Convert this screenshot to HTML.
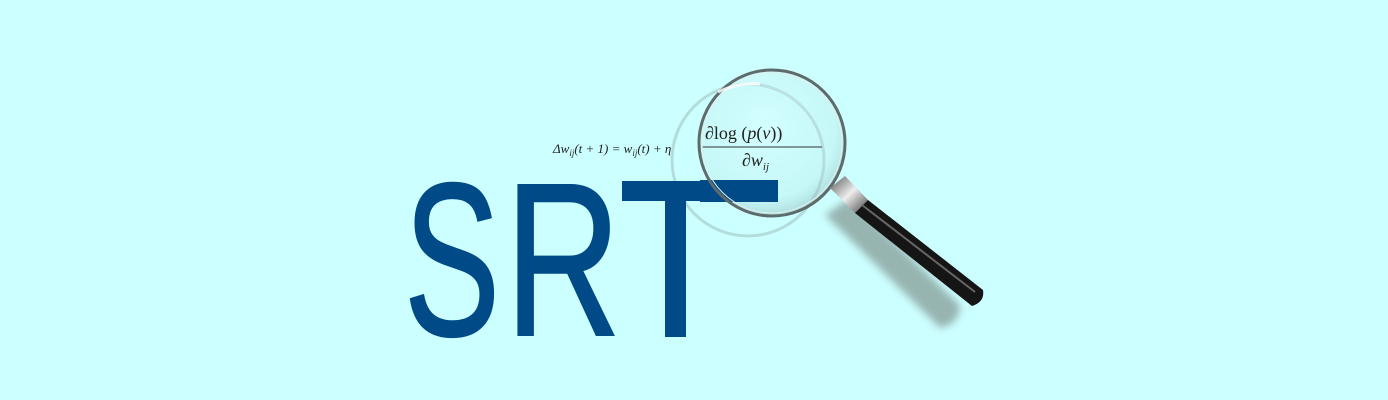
<!DOCTYPE html>
<html><head><style>
html,body{margin:0;padding:0;background:#ccffff;}
svg{display:block}
</style></head><body>
<svg width="1388" height="400" viewBox="0 0 1388 400" xmlns="http://www.w3.org/2000/svg">
<defs>
<radialGradient id="lens" cx="0.45" cy="0.4" r="0.6">
<stop offset="0" stop-color="#e6ffff" stop-opacity="0.3"/>
<stop offset="0.8" stop-color="#b5e2e2" stop-opacity="0.25"/>
<stop offset="1" stop-color="#8fb8b8" stop-opacity="0.5"/>
</radialGradient>
<linearGradient id="metal" x1="0" y1="0" x2="1" y2="1">
<stop offset="0" stop-color="#555"/><stop offset="0.5" stop-color="#eee"/><stop offset="1" stop-color="#444"/>
</linearGradient>
<filter id="blur"><feGaussianBlur stdDeviation="4"/></filter>
</defs>
<rect width="1388" height="400" fill="#ccffff"/>
<path d="M825 215 L940 328 Q960 324 960 305 L850 198 Z" fill="#8ea8a4" opacity="0.85" filter="url(#blur)"/>
<circle cx="748" cy="160" r="76" fill="none" stroke="#a8cfcc" stroke-width="3" opacity="0.7"/>
<g font-family="Liberation Sans, sans-serif" font-size="218" fill="#004a87" stroke="#004a87" stroke-width="2">
<text x="404" y="335" textLength="96" lengthAdjust="spacingAndGlyphs">S</text>
<text x="505" y="335" textLength="116" lengthAdjust="spacingAndGlyphs">R</text>
</g>
<rect x="622" y="181" width="120" height="20" fill="#004a87"/>
<rect x="665" y="181" width="21" height="156" fill="#004a87"/>
<circle cx="772" cy="143" r="73" fill="url(#lens)"/>
<rect x="700" y="180" width="78" height="22" fill="#004a87"/>
<g font-family="Liberation Serif, serif" fill="#222">
<text x="553" y="153" font-size="13" font-style="italic">Δw<tspan font-size="9" dy="3">ij</tspan><tspan dy="-3">(t + 1) = w</tspan><tspan font-size="9" dy="3">ij</tspan><tspan dy="-3">(t) + η</tspan></text>
<text x="705" y="139" font-size="18">∂log (<tspan font-style="italic">p</tspan>(<tspan font-style="italic">v</tspan>))</text>
<line x1="702" y1="147" x2="822" y2="147" stroke="#333" stroke-width="1"/>
<text x="742" y="166" font-size="18" font-style="italic">∂w<tspan font-size="11" dy="4">ij</tspan></text>
</g>
<circle cx="772" cy="143" r="73" fill="none" stroke="#5f6b6b" stroke-width="3"/>
<circle cx="772" cy="143" r="70" fill="none" stroke="#e0f0f0" stroke-width="1"/>
<path d="M718 92 Q740 82 760 84" stroke="#fff" stroke-width="3" fill="none" opacity="0.8"/>
<path d="M830 188 L845 176 L868 200 L855 213 Z" fill="url(#metal)"/>
<path d="M855 213 L868 200 L983 290 Q985 302 972 306 Z" fill="#151515"/>
<path d="M862 205 L975 292" stroke="#666" stroke-width="2"/>
</svg>
</body></html>
